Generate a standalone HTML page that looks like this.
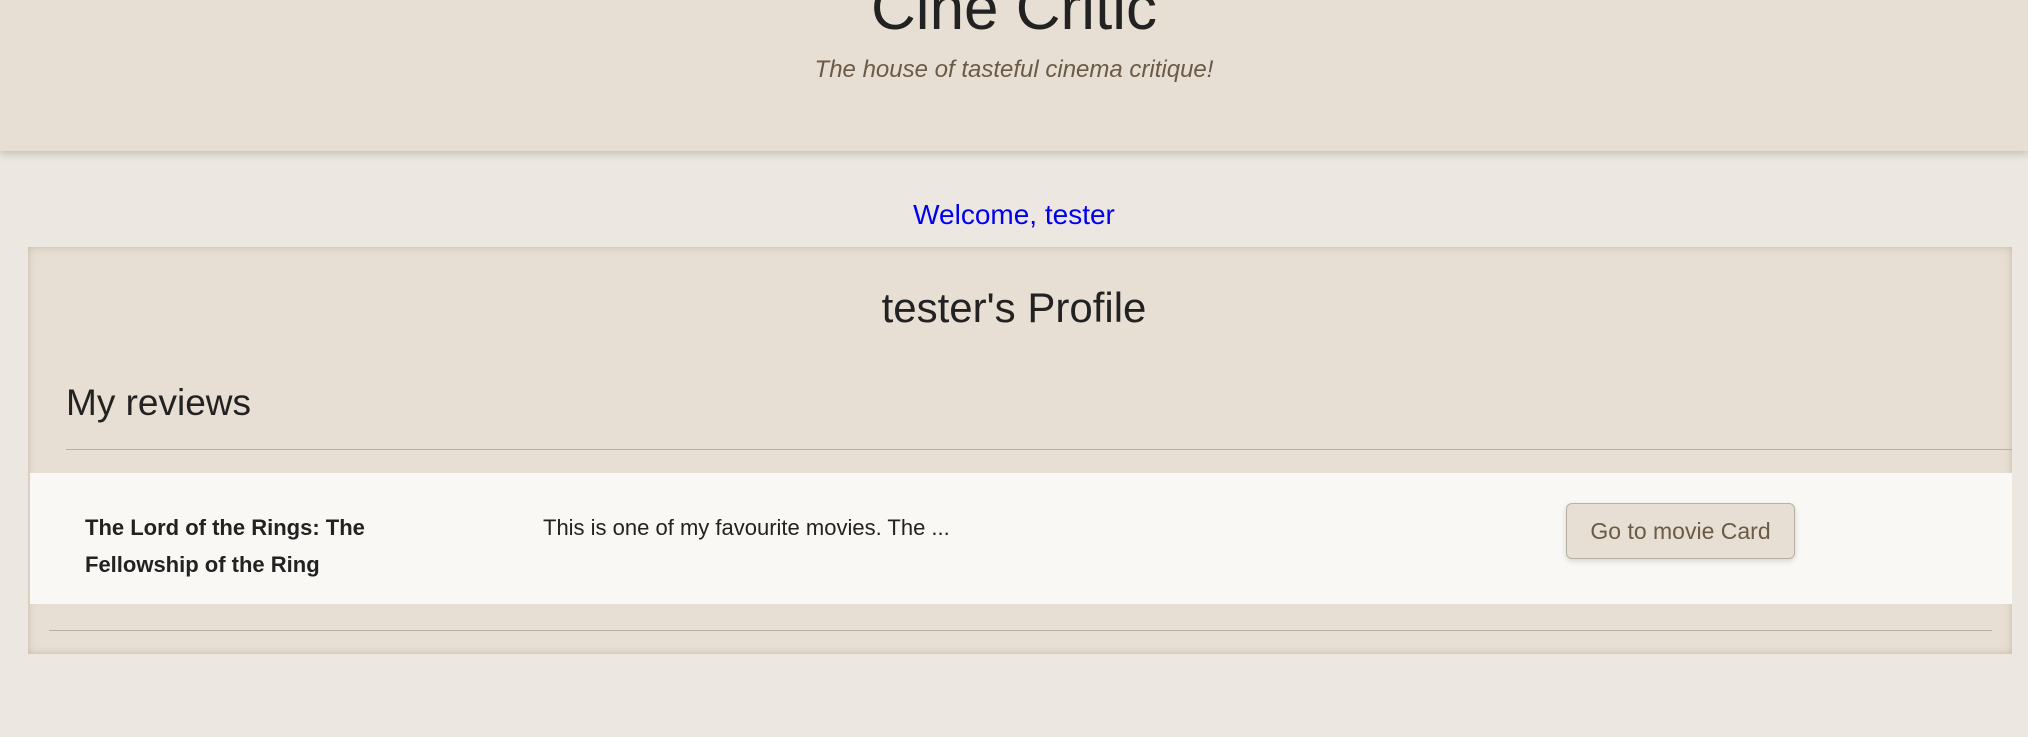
<!DOCTYPE html>
<html><head><meta charset="utf-8"><style>
*{margin:0;padding:0;box-sizing:border-box}
body{width:2028px;height:737px;overflow:hidden;background:#ece8e1;font-family:"Liberation Sans",sans-serif;color:#222;position:relative}
.hdr{position:absolute;left:0;top:0;width:2028px;height:151px;background:#e7dfd3;box-shadow:0 3px 8px rgba(0,0,0,.18)}
.t{position:absolute;left:0;width:2028px;text-align:center;white-space:nowrap}
.card{position:absolute;left:28px;top:247px;width:1984px;height:407px;background:#e7dfd3;box-shadow:inset 0 0 8px rgba(120,100,70,.3)}
.hr{position:absolute;height:1px;background:#b9b0a4}
.row{position:absolute;left:30px;top:473px;width:1982px;height:131px;background:#f9f8f5}
.btn{position:absolute;left:1566px;top:503px;width:229px;height:56px;background:#e7dfd3;border:1px solid #b9b0a4;border-radius:6px;box-shadow:0 2px 6px rgba(0,0,0,.15);color:#6b5a45;font-size:23px;text-align:center;line-height:54px}
</style></head><body>
<div class="hdr"></div>
<div class="t" style="top:-26px;font-size:62px;line-height:70px">Cine Critic</div>
<div class="t" style="top:56px;font-size:24px;font-style:italic;color:#6b5a45;line-height:28px">The house of tasteful cinema critique!</div>
<div class="t" style="top:199px;font-size:28px;color:#0000ee;line-height:32px">Welcome, tester</div>
<div class="card"></div>
<div class="t" style="top:284px;font-size:42px;line-height:48px">tester's Profile</div>
<div style="position:absolute;left:66px;top:381px;font-size:37px;line-height:44px">My reviews</div>
<div class="hr" style="left:66px;top:449px;width:1946px"></div>
<div class="row"></div>
<div style="position:absolute;left:85px;top:509px;font-size:22px;font-weight:bold;line-height:37px;width:330px">The Lord of the Rings: The<br>Fellowship of the Ring</div>
<div style="position:absolute;left:543px;top:509px;font-size:22px;line-height:37px">This is one of my favourite movies. The ...</div>
<div class="btn">Go to movie Card</div>
<div class="hr" style="left:49px;top:630px;width:1943px"></div>
</body></html>
